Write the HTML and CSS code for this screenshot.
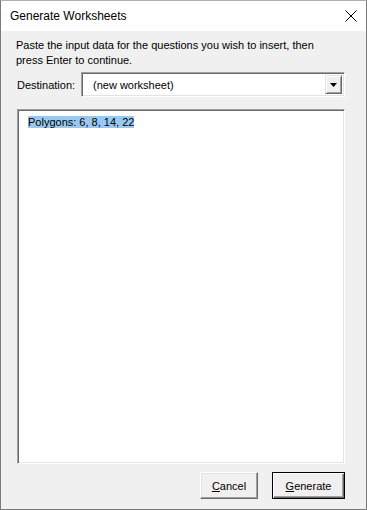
FILE: index.html
```html
<!DOCTYPE html>
<html lang="en">
<head>
  <meta charset="UTF-8">
  <title>Generate Worksheets</title>
  <link rel="stylesheet" href="styles.css">
</head>
<body>
  <div class="window">
    <div class="titlebar">
      <span class="title">Generate Worksheets</span>
      <svg class="close" width="12" height="12" viewBox="0 0 12 12">
        <path d="M0.5 0.5 L11.5 11.5 M11.5 0.5 L0.5 11.5" stroke="#000" stroke-width="1"/>
      </svg>
    </div>
    <div class="content">
      <p class="intro">Paste the input data for the questions you wish to insert, then press Enter to continue.</p>
      <div class="dest-row">
        <label class="dest-label">Destination:</label>
        <div class="combo">
          <span class="combo-value">(new worksheet)</span>
          <span class="combo-btn">
            <svg width="7" height="4" viewBox="0 0 7 4"><path d="M0 0 H7 L3.5 4 Z" fill="#000"/></svg>
          </span>
        </div>
      </div>
      <div class="input-box">
        <span class="selected">Polygons: 6, 8, 14, 22</span>
      </div>
      <div class="buttons">
        <button class="btn"><u>C</u>ancel</button>
        <button class="btn default"><u>G</u>enerate</button>
      </div>
    </div>
  </div>
</body>
</html>
```

FILE: styles.css
```css
body {
  margin: 0;
  font-family: "Liberation Sans", Arial, sans-serif;
  font-size: 11px;
  color: #000;
}
.window {
  width: 367px;
  height: 510px;
  box-sizing: border-box;
  border: 1px solid #7a7a7a;
  border-top-color: #b0b0b0;
  display: flex;
  flex-direction: column;
  background-color: #f0f0f0;
}
.titlebar {
  height: 30px;
  background-color: #fff;
  display: flex;
  align-items: center;
  justify-content: space-between;
  padding: 0 9px 0 9px;
}
.title {
  font-family: "Liberation Sans", Arial, sans-serif;
  font-size: 12px;
}
.content {
  flex: 1;
  display: flex;
  flex-direction: column;
  padding: 7px 21px 10px 15px;
}
.intro {
  margin: 0;
  line-height: 15px;
  padding-right: 20px;
}
.dest-row {
  display: flex;
  align-items: center;
  margin-top: 4px;
}
.dest-label {
  width: 64px;
  padding-left: 1px;
}
.combo {
  flex: 1;
  height: 25px;
  box-sizing: border-box;
  background-color: #fff;
  border-top: 1px solid #a0a0a0;
  border-left: 1px solid #a0a0a0;
  border-right: 1px solid #fff;
  border-bottom: 1px solid #fff;
  box-shadow: inset 1px 1px #696969, inset -1px -1px #e3e3e3;
  display: flex;
  align-items: center;
  padding: 2px;
}
.combo-value {
  flex: 1;
  padding-left: 9px;
}
.combo-btn {
  width: 17px;
  height: 19px;
  box-sizing: border-box;
  background-color: #f0f0f0;
  border-top: 1px solid #e3e3e3;
  border-left: 1px solid #e3e3e3;
  border-right: 1px solid #696969;
  border-bottom: 1px solid #696969;
  box-shadow: inset 1px 1px #fff, inset -1px -1px #a0a0a0;
  display: flex;
  align-items: center;
  justify-content: center;
}
.input-box {
  flex: 1;
  margin-top: 12px;
  margin-left: 1px;
  box-sizing: border-box;
  background-color: #fff;
  border-top: 1px solid #a0a0a0;
  border-left: 1px solid #a0a0a0;
  border-right: 1px solid #fff;
  border-bottom: 1px solid #fff;
  box-shadow: inset 1px 1px #696969, inset -1px -1px #e3e3e3;
  padding: 5px 0 0 10px;
  line-height: 15px;
}
.selected {
  background-color: #99c9ef;
}
.buttons {
  display: flex;
  justify-content: flex-end;
  gap: 14px;
  margin-top: 8px;
}
.btn {
  font-family: "Liberation Sans", Arial, sans-serif;
  font-size: 11px;
  height: 27px;
  width: 58px;
  background-color: #f0f0f0;
  border-top: 1px solid #fff;
  border-left: 1px solid #fff;
  border-right: 1px solid #696969;
  border-bottom: 1px solid #696969;
  box-shadow: inset -1px -1px #a0a0a0, inset 1px 1px #e3e3e3;
  padding: 0;
}
.btn.default {
  width: 73px;
  border: 1px solid #000;
  box-shadow: inset 1px 1px #fff, inset -1px -1px #696969, inset -2px -2px #a0a0a0;
}
```
